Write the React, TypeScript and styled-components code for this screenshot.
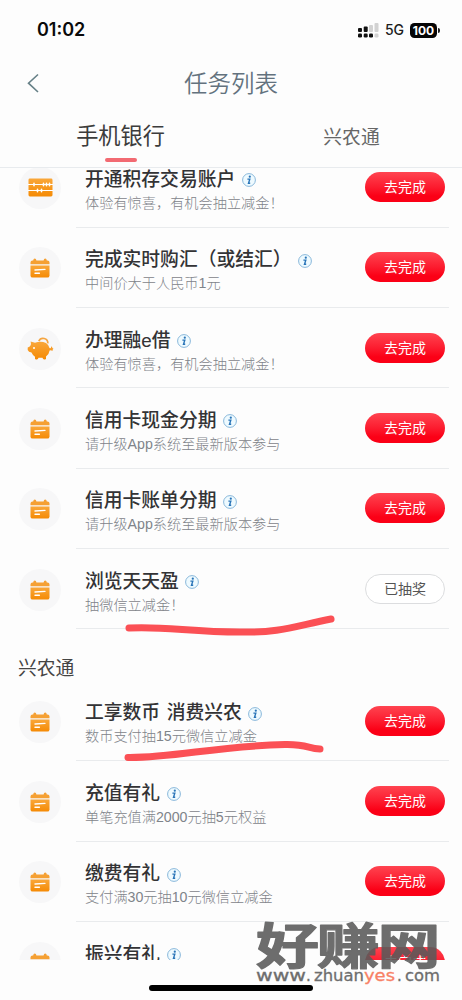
import React from "react";
import styled, { createGlobalStyle } from "styled-components";

const Global = createGlobalStyle`
  * { box-sizing: border-box; }
  body { margin: 0; background: #fdfdfd; }
`;

const Screen = styled.div`
  position: relative;
  width: 462px;
  height: 1000px;
  overflow: hidden;
  display: flex;
  flex-direction: column;
  background: #fdfdfd;
  color: #333;
  font-family: "Liberation Sans", "Noto Sans CJK SC", sans-serif;
`;

const StatusBar = styled.div`
  height: 60px;
  flex: none;
  display: flex;
  align-items: center;
  justify-content: space-between;
  padding: 0 22px 0 37px;
`;

const Clock = styled.span`
  font: 600 18px/24px Inter, sans-serif;
  color: #0a0a0a;
`;

const StatusIcons = styled.div`
  display: flex;
  align-items: center;
`;

const Network = styled.span`
  font: 500 14px/20px Inter, sans-serif;
  margin: 0 6px 0 6px;
  color: #1c1c1c;
`;

const Battery = styled.span`
  width: 27px;
  height: 15px;
  border-radius: 4.5px;
  background: #050505;
  color: #fff;
  font: 700 12px/15px Inter, sans-serif;
  text-align: center;
`;

const BatteryTip = styled.i`
  width: 2px;
  height: 5px;
  margin-left: 1px;
  border-radius: 0 2px 2px 0;
  background: #222;
`;

const NavBar = styled.header`
  height: 46px;
  flex: none;
  display: grid;
  grid-template-columns: 60px 1fr 60px;
  align-items: center;
`;

const BackButton = styled.button`
  border: 0;
  background: none;
  padding: 0 0 0 26px;
  display: flex;
`;

const PageTitle = styled.h1`
  margin: 0;
  padding-top: 2px;
  text-align: center;
  font-size: 23.5px;
  line-height: 30px;
  font-weight: 350;
  color: #63727e;
`;

const Tabs = styled.nav`
  height: 62px;
  flex: none;
  display: grid;
  grid-template-columns: 241px 221px;
  border-bottom: 1px solid #e8ebee;
`;

const Tab = styled.div<{ $active?: boolean }>`
  display: flex;
  flex-direction: column;
  align-items: center;
  padding-top: ${(p) => (p.$active ? 15 : 16)}px;
  line-height: 32px;
  font-size: ${(p) => (p.$active ? 22.2 : 18.8)}px;
  color: ${(p) => (p.$active ? "#3c3c3c" : "#666")};
  &::after {
    content: "";
    width: 32px;
    height: 3.5px;
    margin-top: 5px;
    border-radius: 2px;
    background: ${(p) => (p.$active ? "#f26a72" : "transparent")};
  }
`;

const List = styled.main`
  height: 792px;
  flex: none;
  overflow: hidden;
`;

const Group = styled.section<{ $scrolled?: boolean }>`
  margin-top: ${(p) => (p.$scrolled ? -20.7 : 0)}px;
`;

const GroupTitle = styled.h2`
  margin: 0;
  height: 51.6px;
  padding: 24px 0 0 18px;
  font-size: 18.8px;
  line-height: 32px;
  font-weight: 400;
  color: #444;
`;

const Row = styled.div`
  height: 80.35px;
  display: grid;
  grid-template-columns: 76px 1fr;
`;

const Badge = styled.div`
  width: 42px;
  height: 42px;
  margin: 19.6px 0 0 19px;
  border-radius: 50%;
  background: #f7f7f8;
  display: flex;
  align-items: center;
  justify-content: center;
`;

const RowBody = styled.div`
  display: flex;
  justify-content: space-between;
  margin-right: 13px;
  padding: 0 4px 0 9px;
  border-bottom: 1px solid #e9ebed;
`;

const Texts = styled.div`
  padding-top: 16px;
  white-space: nowrap;
`;

const Name = styled.div`
  display: flex;
  align-items: center;
  height: 28px;
  font-size: 18.8px;
  font-weight: 500;
  word-spacing: 1.3px;
  color: #333335;
  white-space: pre;
  svg { margin: 6px 0 0 6.5px; }
`;

const Note = styled.div`
  height: 20px;
  margin-top: 1.5px;
  font-size: 14.2px;
  line-height: 20px;
  font-weight: 300;
  color: #7f848a;
`;

const Action = styled.button<{ $done?: boolean }>`
  width: 80px;
  height: 30px;
  margin-top: 24.7px;
  padding: 0;
  border-radius: 15px;
  border: ${(p) => (p.$done ? "1px solid #dcdddf" : "0")};
  background: ${(p) => (p.$done ? "#fff" : "linear-gradient(#ff4450, #fc1c2f 50%, #fb0016 80%)")};
  color: ${(p) => (p.$done ? "#555" : "#fff")};
  font-family: inherit;
  font-size: 14px;
  line-height: 28px;
`;

const HomeIndicator = styled.div`
  position: absolute;
  left: 149px;
  top: 985px;
  width: 164px;
  height: 5.5px;
  border-radius: 3px;
  background: #000;
`;

const Overlay = styled.svg`
  position: absolute;
  left: 0;
  top: 0;
  pointer-events: none;
`;

const InfoIcon = () => (
  <svg width="14" height="14" viewBox="0 0 14 14">
    <circle cx="7" cy="7" r="6.4" fill="#eefaff" stroke="#7db0d6" strokeWidth="0.9" />
    <circle cx="7.8" cy="3.7" r="1.1" fill="#2874b8" />
    <path d="M5.4 6.1H7.8L6.5 10.2H8.2" fill="none" stroke="#2874b8" strokeWidth="1.4" />
  </svg>
);

const Gradient = ({ id }: { id: string }) => (
  <linearGradient id={id} x1="0" y1="0" x2="0" y2="1">
    <stop offset="0" stopColor="#f9a73a" />
    <stop offset="1" stopColor="#f58a04" />
  </linearGradient>
);

const CalendarIcon = () => (
  <svg width="20" height="20" viewBox="0 0 20 20">
    <defs><Gradient id="cal" /></defs>
    <path d="M.5 6.3V4.4Q.5 2.4 2.5 2.4H3.2Q3.4.6 4.8.6T6.4 2.4H13.6Q13.8.6 15.2.6T16.8 2.4H17.5Q19.5 2.4 19.5 4.4V6.3Z" fill="#f5a033" />
    <path d="M.5 7.6H19.5V17.4Q19.5 19.6 17.3 19.6H2.7Q.5 19.6.5 17.4Z" fill="url(#cal)" />
    <path d="M5 12L15 11.4M5 15.3H9.4" stroke="#fff" strokeWidth="1.4" strokeLinecap="round" />
  </svg>
);

const AbacusIcon = () => (
  <svg width="25" height="19" viewBox="0 0 25 19">
    <defs><Gradient id="aba" /></defs>
    <rect x=".5" y=".5" width="24" height="18" rx="1.4" fill="url(#aba)" />
    <path d="M0 6.5H25M0 12.5H25" stroke="#fff" strokeWidth="1.1" />
    <path d="M6 5.3V7.7M15.5 5.3V7.7M18.5 5.3V7.7M21.5 5.3V7.7M9.5 11.3V13.7M13.5 11.3V13.7" stroke="#fff" strokeWidth="1.6" strokeLinecap="round" />
  </svg>
);

const PiggyIcon = () => (
  <svg width="27" height="25" viewBox="0 0 27 25">
    <defs><Gradient id="pig" /></defs>
    <path d="M11.8 5.2A4.7 4.7 0 0 1 20.8 7.4" fill="none" stroke="#f5a540" strokeWidth="1.7" />
    <path d="M3.6 5.6L8 6.8Q14 4.5 19 7Q22 9 22.5 12Q24.5 13 24 10.5L25 10.7Q25 12 26.5 12.7Q25.5 13.2 25.4 15Q24.3 13.9 22.6 14.4Q22 18.5 19 20.5V23Q16 24.5 15.5 21.8H11.5Q11 24.5 8 23V20.7Q5.5 19 4.5 16.5Q1.5 16 .7 14V11.5Q2.7 11 3.5 9.5Q4.4 8.3 3.6 5.6Z" fill="url(#pig)" />
    <circle cx="7" cy="12" r="1" fill="#fff" />
  </svg>
);

const icons = { calendar: CalendarIcon, abacus: AbacusIcon, piggy: PiggyIcon };

type Task = { name: string; note: string; icon?: keyof typeof icons; done?: boolean };

const bankTasks: Task[] = [
  { name: "开通积存交易账户", note: "体验有惊喜，有机会抽立减金！", icon: "abacus" },
  { name: "完成实时购汇（或结汇）", note: "中间价大于人民币1元" },
  { name: "办理融e借", note: "体验有惊喜，有机会抽立减金！", icon: "piggy" },
  { name: "信用卡现金分期", note: "请升级App系统至最新版本参与" },
  { name: "信用卡账单分期", note: "请升级App系统至最新版本参与" },
  { name: "浏览天天盈", note: "抽微信立减金！", done: true },
];

const ruralTasks: Task[] = [
  { name: "工享数币 消费兴农", note: "数币支付抽15元微信立减金" },
  { name: "充值有礼", note: "单笔充值满2000元抽5元权益" },
  { name: "缴费有礼", note: "支付满30元抽10元微信立减金" },
  { name: "振兴有礼", note: "" },
];

const TaskRow = ({ name, note, icon = "calendar", done }: Task) => {
  const Icon = icons[icon];
  return (
    <Row>
      <Badge><Icon /></Badge>
      <RowBody>
        <Texts>
          <Name>{name}<InfoIcon /></Name>
          <Note>{note}</Note>
        </Texts>
        <Action $done={done}>{done ? "已抽奖" : "去完成"}</Action>
      </RowBody>
    </Row>
  );
};

const SignalIcon = () => (
  <svg width="21" height="15" viewBox="0 0 21 15">
    <g fill="#111">
      <rect x="0" y="5" width="4" height="4" rx="1" />
      <rect x="5.7" y="3.5" width="4" height="5.5" rx="1" />
      <rect x="0" y="10.5" width="4" height="4" rx="1.3" />
      <rect x="5.7" y="10.5" width="4" height="4" rx="1.3" />
      <rect x="11" y="10.5" width="4" height="4" rx="1.3" />
    </g>
    <g fill="#d2d2d2">
      <rect x="11" y="2" width="4" height="7" rx="1" />
      <rect x="16.5" y="0" width="4" height="9" rx="1" />
      <rect x="16.5" y="10.5" width="4" height="4" rx="1.3" />
    </g>
  </svg>
);

export default function App() {
  return (
    <Screen>
      <Global />
      <StatusBar>
        <Clock>01:02</Clock>
        <StatusIcons>
          <SignalIcon />
          <Network>5G</Network>
          <Battery>100</Battery>
          <BatteryTip />
        </StatusIcons>
      </StatusBar>
      <NavBar>
        <BackButton aria-label="返回">
          <svg width="14" height="20" viewBox="0 0 14 20">
            <path d="M12 1.5L2.5 10.2L12 19" fill="none" stroke="#668087" strokeWidth="1.6" />
          </svg>
        </BackButton>
        <PageTitle>任务列表</PageTitle>
      </NavBar>
      <Tabs>
        <Tab $active>手机银行</Tab>
        <Tab>兴农通</Tab>
      </Tabs>
      <List>
        <Group $scrolled>
          {bankTasks.map((t) => <TaskRow key={t.name} {...t} />)}
        </Group>
        <Group>
          <GroupTitle>兴农通</GroupTitle>
          {ruralTasks.map((t) => <TaskRow key={t.name} {...t} />)}
        </Group>
      </List>
      <HomeIndicator />
      <Overlay width="462" height="1000" viewBox="0 0 462 1000">
        <g fill="none" stroke="#fb5055" strokeLinecap="round" strokeLinejoin="round">
          <path d="M129 628C165 626 190 632 240 632C280 633 295 626 331 619" strokeWidth="7" />
          <path d="M128 757.5C175 758 215 746 285 744.5C308 744 308 749 320 749" strokeWidth="7" />
        </g>
        <g opacity="0.88">
          <text transform="translate(256 964) scale(1.3 1)" fontFamily="Noto Sans CJK SC, sans-serif" fontWeight="700" fontSize="48.5" textLength="142" lengthAdjust="spacing" fill="#5a5a5a" stroke="#5a5a5a" strokeWidth="1.2" strokeLinejoin="round">好赚网</text>
          <g fontFamily="DejaVu Sans, sans-serif" fontSize="15" fill="#5a5a5a" stroke="#5a5a5a" strokeWidth="0.3">
            <text x="256" y="981" textLength="50" lengthAdjust="spacingAndGlyphs">www</text>
            <text x="306" y="981">.</text>
            <text x="314" y="981" textLength="50" lengthAdjust="spacingAndGlyphs">zhuan</text>
            <text x="364" y="981" textLength="31" lengthAdjust="spacingAndGlyphs" fill="#f87050" stroke="#f87050">yes</text>
            <text x="397" y="981">.</text>
            <text x="405" y="981" textLength="35" lengthAdjust="spacingAndGlyphs">com</text>
          </g>
        </g>
      </Overlay>
    </Screen>
  );
}
